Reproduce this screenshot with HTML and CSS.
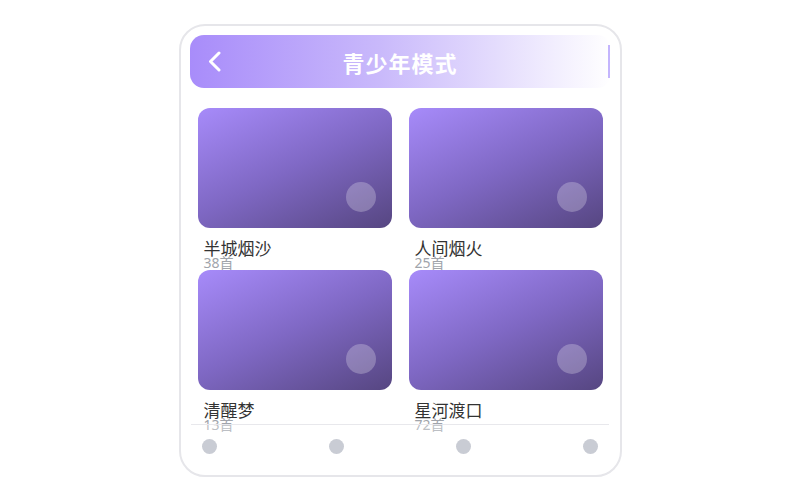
FILE: index.html
```html
<!DOCTYPE html>
<html lang="zh">
  <head>
    <meta charset="utf-8" />
    <title>青少年模式</title>
    <link rel="stylesheet" href="styles.css">
  </head>
  <body>
    <div class="phone">
      <div class="topbar">
        <span class="back">
          <svg width="13" height="21" viewBox="0 0 13 21">
            <polyline points="11,2 2.5,10.5 11,19" fill="none" stroke="#fff" stroke-width="3" stroke-linecap="round" stroke-linejoin="round" />
          </svg>
        </span>
        <span class="title">青少年模式</span>
        <span class="side"><i class="bar"></i></span>
      </div>

      <div class="grid">
        <div class="item">
          <div class="cover"><span class="play"></span></div>
          <div class="name">半城烟沙</div>
          <div class="count">38首</div>
        </div>
        <div class="item">
          <div class="cover"><span class="play"></span></div>
          <div class="name">人间烟火</div>
          <div class="count">25首</div>
        </div>
        <div class="item">
          <div class="cover"><span class="play"></span></div>
          <div class="name">清醒梦</div>
          <div class="count">13首</div>
        </div>
        <div class="item">
          <div class="cover"><span class="play"></span></div>
          <div class="name">星河渡口</div>
          <div class="count">72首</div>
        </div>
      </div>

      <!-- bottom tabs sit over the list -->
      <div class="tabs">
        <span class="dot"></span>
        <span class="dot"></span>
        <span class="dot"></span>
        <span class="dot"></span>
      </div>
    </div>
  </body>
</html>
```

FILE: styles.css
```css
body {
  margin: 0;
  background: #fff;
  font-family: "Noto Sans", "Noto Sans CJK SC", sans-serif;
}

.phone {
  position: relative;
  box-sizing: border-box;
  width: 443px;
  height: 453px;
  margin: 24px auto 0;
  padding: 9px;
  border: 2px solid #e6e6ea;
  border-radius: 26px;
  overflow: hidden;
  background: #fff;
}

.topbar {
  display: flex;
  align-items: center;
  height: 53px;
  border-radius: 14px;
  background: linear-gradient(90deg, #a88cfa 0%, #c9b9fb 45%, #ffffff 100%);
}

.back {
  display: flex;
  width: 40px;
  padding-left: 18px;
  box-sizing: border-box;
}

.title {
  flex: 1;
  text-align: center;
  color: #fff;
  font-family: "Noto Sans CJK SC", sans-serif;
  font-size: 22px;
  font-weight: bold;
  letter-spacing: 1px;
}

.side {
  display: flex;
  justify-content: flex-end;
  width: 40px;
}

.bar {
  width: 1.5px;
  height: 33px;
  margin-right: 1px;
  background: #c4b5fd;
}

.grid {
  display: grid;
  grid-template-columns: 1fr 1fr;
  grid-auto-rows: 150px;
  column-gap: 17px;
  row-gap: 12px;
  padding: 0 8px;
  margin-top: 20px;
}

.cover {
  position: relative;
  height: 120px;
  border-radius: 12px;
  background: linear-gradient(155deg, #a78bfa 0%, #7f68c4 50%, #564681 100%);
}

.play {
  position: absolute;
  right: 16px;
  bottom: 16px;
  width: 30px;
  height: 30px;
  border-radius: 50%;
  background: rgba(255, 255, 255, 0.25);
}

.name {
  margin-top: 11px;
  padding-left: 6px;
  font-family: "Noto Sans CJK SC", sans-serif;
  font-size: 17px;
  line-height: 17px;
  color: #333;
}

.count {
  padding-left: 6px;
  font-size: 14px;
  line-height: 14px;
  color: #a0a4ab;
}

.tabs {
  position: absolute;
  left: 10px;
  right: 11px;
  bottom: 0;
  height: 51px;
  box-sizing: border-box;
  display: flex;
  justify-content: space-between;
  align-items: flex-start;
  padding: 14px 10px 0 11px;
  border-top: 1px solid #e8e8ec;
  background: rgba(255, 255, 255, 0.3);
}

.dot {
  width: 15px;
  height: 15px;
  border-radius: 50%;
  background: #c9ccd4;
}
```
